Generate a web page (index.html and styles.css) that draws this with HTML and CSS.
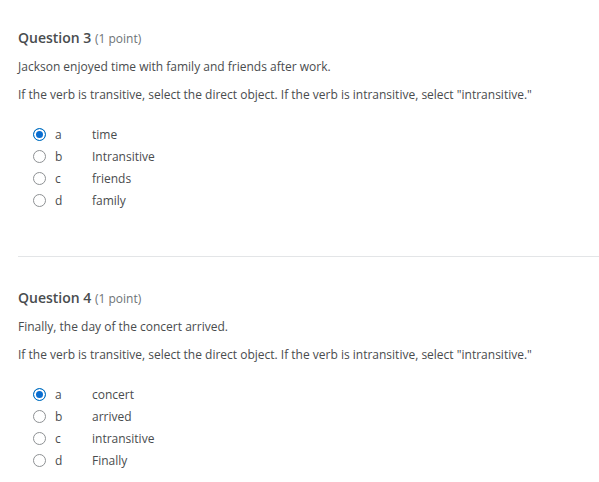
FILE: index.html
```html
<!DOCTYPE html>
<html>
<head>
<meta charset="utf-8">
<link rel="stylesheet" href="styles.css">
</head>
<body>
<div class="page">
  <section class="question">
    <h2 class="q-title">Question 3 <span class="q-points">(1 point)</span></h2>
    <p class="q-text">Jackson enjoyed time with family and friends after work.</p>
    <p class="q-text">If the verb is transitive, select the direct object. If the verb is intransitive, select "intransitive."</p>
    <div class="choices">
      <div class="choice"><span class="radio checked"></span><span class="letter">a</span><span class="answer">time</span></div>
      <div class="choice"><span class="radio"></span><span class="letter">b</span><span class="answer">Intransitive</span></div>
      <div class="choice"><span class="radio"></span><span class="letter">c</span><span class="answer">friends</span></div>
      <div class="choice"><span class="radio"></span><span class="letter">d</span><span class="answer">family</span></div>
    </div>
  </section>
  <hr class="divider">
  <section class="question">
    <h2 class="q-title">Question 4 <span class="q-points">(1 point)</span></h2>
    <p class="q-text">Finally, the day of the concert arrived.</p>
    <p class="q-text">If the verb is transitive, select the direct object. If the verb is intransitive, select "intransitive."</p>
    <div class="choices">
      <div class="choice"><span class="radio checked"></span><span class="letter">a</span><span class="answer">concert</span></div>
      <div class="choice"><span class="radio"></span><span class="letter">b</span><span class="answer">arrived</span></div>
      <div class="choice"><span class="radio"></span><span class="letter">c</span><span class="answer">intransitive</span></div>
      <div class="choice"><span class="radio"></span><span class="letter">d</span><span class="answer">Finally</span></div>
    </div>
  </section>
</div>
</body>
</html>
```
FILE: styles.css
```css
html, body {
  margin: 0;
  padding: 0;
  background: #ffffff;
}
body {
  font-family: "Open Sans", "Liberation Sans", sans-serif;
  color: #494c4e;
}
.page {
  padding: 28px 0 0 18px;
}
.question {
  padding-right: 18px;
}
.q-title {
  margin: 0;
  font-size: 14px;
  font-weight: 600;
  line-height: 20px;
  color: #494c4e;
}
.q-points {
  font-size: 12px;
  font-weight: 400;
  color: #6e7376;
}
.q-text {
  margin: 0;
  font-size: 12px;
  line-height: 18px;
}
.q-title + .q-text {
  margin-top: 9px;
}
.q-text + .q-text {
  margin-top: 10px;
}
.choices {
  margin-top: 19px;
  padding-left: 15px;
}
.choice {
  display: flex;
  align-items: center;
  height: 22px;
  font-size: 12px;
}
.radio {
  box-sizing: border-box;
  width: 13px;
  height: 13px;
  border-radius: 50%;
  border: 1px solid #8e9194;
  background: #fff;
}
.radio.checked {
  border: 1px solid #006fbf;
  box-shadow: inset 0 0 0 2px #ffffff;
  background: #0a6ed1;
}
.letter {
  margin-left: 9px;
  width: 37px;
}
.answer {
  color: #494c4e;
}
.divider {
  margin: 45px 0 0 0;
  border: 0;
  border-top: 1px solid #e3e5e7;
  height: 0;
}
.divider + .question {
  margin-top: 31px;
}
```
